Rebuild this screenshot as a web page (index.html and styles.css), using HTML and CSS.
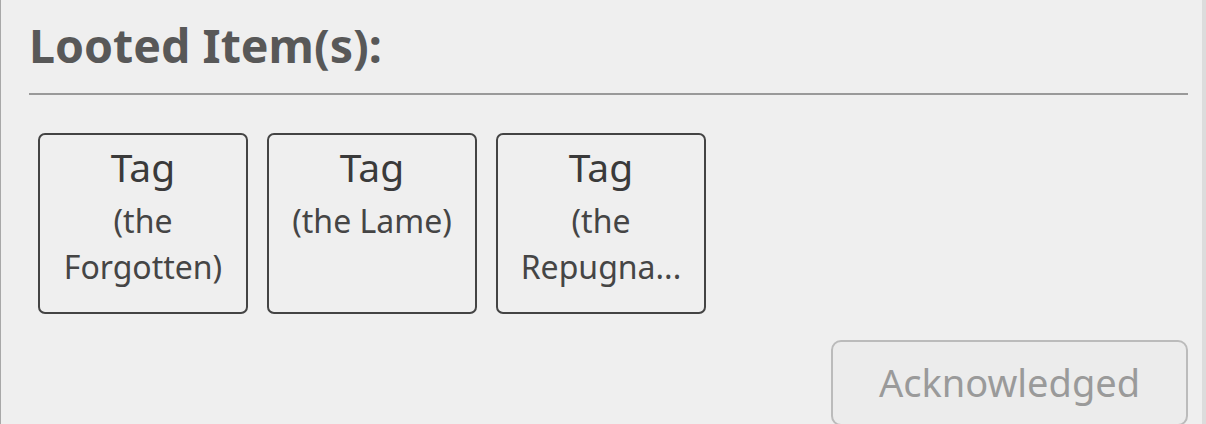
FILE: index.html
```html
<!DOCTYPE html>
<html lang="en">
<head>
    <meta charset="UTF-8">
    <meta name="viewport" content="width=device-width, initial-scale=1.0">
    <title>Looted Items</title>
    <link rel="stylesheet" href="styles.css">
</head>
<body>
    <div class="panel">
        <h1 class="panel-title">Looted Item(s):</h1>
        <div class="loot-list">
            <div class="loot-item">
                <div class="loot-name">Tag</div>
                <div class="loot-epithet">(the Forgotten)</div>
            </div>
            <div class="loot-item">
                <div class="loot-name">Tag</div>
                <div class="loot-epithet">(the Lame)</div>
            </div>
            <div class="loot-item">
                <div class="loot-name">Tag</div>
                <div class="loot-epithet">(the Repugna...</div>
            </div>
        </div>
        <div class="actions">
            <button class="ack-button" disabled>Acknowledged</button>
        </div>
    </div>
</body>
</html>
```

FILE: styles.css
```css
body {
    margin: 0;
    font-family: "Noto Sans", "Open Sans", sans-serif;
    background-color: #efefef;
    overflow: hidden;
}
.panel {
    width: 1206px;
    box-sizing: border-box;
    padding: 13px 14px 0 28px;
    border-left: 1px solid #a8a8a8;
    border-right: 4px solid #dcdcdc;
    background-color: #efefef;
    min-height: 424px;
}
.panel-title {
    margin: 0;
    font-size: 46.5px;
    font-weight: 700;
    line-height: normal;
    color: #585858;
    padding-bottom: 16px;
    border-bottom: 2px solid #999999;
}
.loot-list {
    display: flex;
    gap: 19px;
    padding: 38px 0 0 9px;
}
.loot-item {
    width: 210px;
    height: 181px;
    box-sizing: border-box;
    border: 2px solid #444444;
    border-radius: 7px;
    padding: 5px 16px 0;
    text-align: center;
}
.loot-name {
    font-size: 39px;
    color: #3a3a3a;
    line-height: normal;
}
.loot-epithet {
    margin-top: 5px;
    font-size: 32px;
    line-height: 46px;
    color: #454545;
}
.actions {
    display: flex;
    justify-content: flex-end;
    padding-top: 26px;
}
.ack-button {
    width: 357px;
    padding: 14px 0 16px;
    border: 2px solid #bbbbbb;
    border-radius: 10px;
    background-color: #ececec;
    font-family: inherit;
    font-size: 38px;
    color: #9a9a9a;
}
```
